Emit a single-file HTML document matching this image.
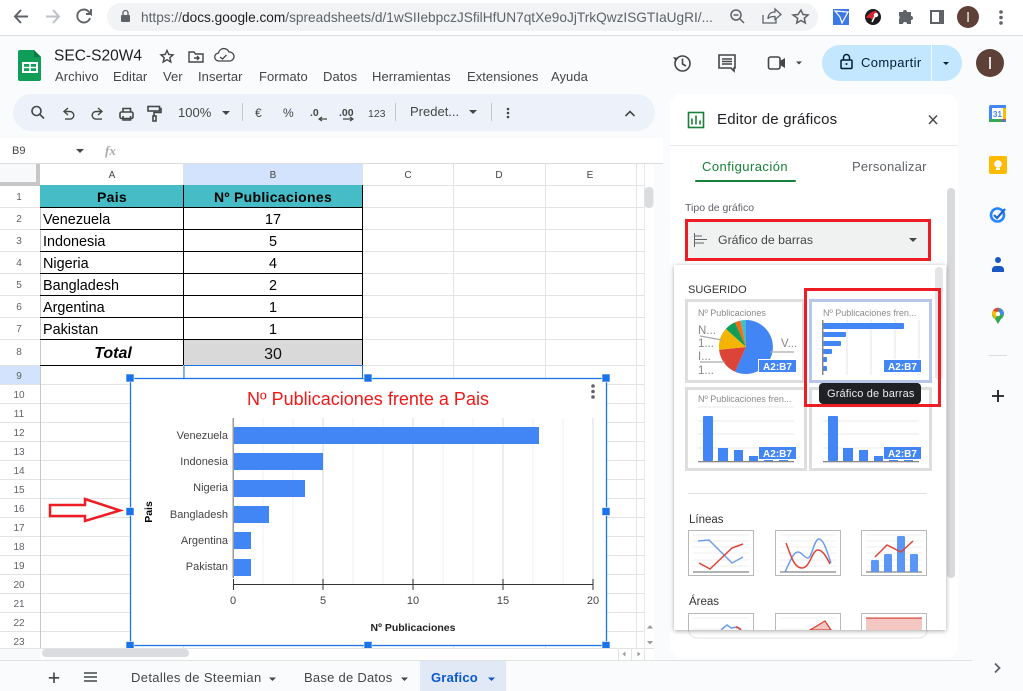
<!DOCTYPE html>
<html><head><meta charset="utf-8"><title>SEC-S20W4</title>
<style>
html,body{margin:0;padding:0;width:1023px;height:691px;overflow:hidden;background:#f9fbfd}
svg{display:block;font-family:"Liberation Sans",Arial,sans-serif}
.m{font-size:13px;fill:#444746;letter-spacing:.05px}
.r{font-size:10px;fill:#5f6368;text-anchor:middle}
.c{font-size:10px;fill:#444;text-anchor:middle}
.d{font-size:14.400px;fill:#000}
.n{font-size:14.400px;fill:#000;text-anchor:middle}
.l{font-size:11px;fill:#444;text-anchor:end}
.t{font-size:11px;fill:#444;text-anchor:middle}
.b{font-size:10px;fill:#fff;font-weight:bold;text-anchor:middle}
.g{font-size:9px;fill:#8a8a8a}
.h{font-size:11.500px;fill:#888}
.i{fill:none;stroke:#444746;stroke-width:1.600}
</style></head><body>
<svg width="1023" height="691" viewBox="0 0 1023 691" xmlns="http://www.w3.org/2000/svg">
<defs>
<filter id="sh" x="-10%" y="-10%" width="120%" height="120%"><feDropShadow dx="0" dy="1" stdDeviation="2.500" flood-color="#000" flood-opacity=".35"/></filter>
<clipPath id="cp"><rect x="674" y="265" width="272" height="365"/></clipPath>
</defs>
<!-- browser bar -->
<rect width="1023" height="35" fill="#fff"/>
<rect y="35" width="1023" height="1" fill="#dadce0"/>
<rect x="107" y="3" width="711" height="28" rx="14" fill="#f1f3f4"/>
<path d="M28 16.500H15M21 10L15 16.500L21 23" fill="none" stroke="#5f6368" stroke-width="2"/>
<path d="M46 16.500H59M53 10L59 16.500L53 23" fill="none" stroke="#bdc1c6" stroke-width="2"/>
<path d="M90 18a6.500 6.500 0 1 1-1.500-6.500L91 14V9M91 14h-5" fill="none" stroke="#5f6368" stroke-width="1.900"/>
<rect x="121" y="15" width="9" height="7" rx="1" fill="#5f6368"/><path d="M123 15v-2a2.300 2.300 0 0 1 5 0v2" fill="none" stroke="#5f6368" stroke-width="1.300"/>
<text x="141" y="22" font-size="14" fill="#5f6368" textLength="572" lengthAdjust="spacingAndGlyphs">https://<tspan fill="#202124">docs.google.com</tspan>/spreadsheets/d/1wSIIebpczJSfilHfUN7qtXe9oJjTrkQwzISGTIaUgRI/...</text>
<circle cx="736" cy="15" r="5" fill="none" stroke="#5f6368" stroke-width="1.500"/><path d="M733.500 15h5M740 19l4 4" stroke="#5f6368" stroke-width="1.500"/>
<path d="M763 15v8h13v-4M768 19c0-5 3-7 7-7V9l6 5.500-6 5v-3c-3 0-5 0-7 2z" fill="none" stroke="#5f6368" stroke-width="1.300"/>
<path d="M801 10l2 4.500 5 .5-3.700 3.300 1 4.700-4.300-2.500-4.300 2.500 1-4.700L793 15l5-.5z" fill="none" stroke="#5f6368" stroke-width="1.500"/>
<rect x="833" y="9" width="16" height="16" fill="#3b78e7"/><path d="M835 11l13 1-6 11-2-6z" fill="none" stroke="#fff" stroke-width="1.200"/>
<circle cx="873" cy="17" r="8" fill="#1c1c1c"/><path d="M866 18c2-4 6-7 10-7l2 3-5 6-3-2z" fill="#d9232e"/><circle cx="876" cy="15" r="2.200" fill="#fff"/><path d="M875 16l-3 6" stroke="#fff" stroke-width="1.500"/>
<path d="M899 12h4a2 2 0 0 1 4 0h4v4a2 2 0 0 1 0 4v4h-4a2 2 0 0 0-4 0h-4v-5a2 2 0 0 0 0-3z" fill="#5f6368"/>
<rect x="930" y="10" width="14" height="14" fill="#5f6368"/><rect x="932" y="12" width="7" height="10" fill="#fff"/>
<circle cx="968" cy="17" r="11" fill="#5d4037"/><rect x="967.300" y="12" width="1.500" height="10" fill="#e6dedb"/>
<g fill="#5f6368"><circle cx="1001" cy="12" r="1.800"/><circle cx="1001" cy="17.500" r="1.800"/><circle cx="1001" cy="23" r="1.800"/></g>

<!-- docs header -->
<path d="M20 50h14l7 7v22a2 2 0 0 1-2 2H20a2 2 0 0 1-2-2V52a2 2 0 0 1 2-2z" fill="#0f9d58"/>
<path d="M34 50l7 7h-7z" fill="#0a7a42"/>
<rect x="23" y="63" width="14" height="9" fill="none" stroke="#fff" stroke-width="2"/><path d="M30 63v9M23 67.500h14" stroke="#fff" stroke-width="1.500"/>
<text x="54" y="60.500" font-size="16" fill="#1f1f1f" textLength="88" lengthAdjust="spacingAndGlyphs">SEC-S20W4</text>
<path d="M167 50.500l1.800 4 4.200.4-3.200 2.800 1 4.300-3.800-2.300-3.800 2.300 1-4.300-3.200-2.800 4.200-.4z" fill="none" stroke="#444746" stroke-width="1.400"/>
<path d="M189 52h5l1.500 2H203v8h-14zM194 58h5M197 56l2 2-2 2" fill="none" stroke="#444746" stroke-width="1.400"/>
<path d="M221 61h-2a4 4 0 0 1-.5-8 5.500 5.500 0 0 1 10.500-1 4.500 4.500 0 0 1 1 9zM220 57l2.500 2 4-4" fill="none" stroke="#444746" stroke-width="1.300"/>
<text x="55" y="81" class="m">Archivo</text><text x="113" y="81" class="m">Editar</text><text x="163" y="81" class="m">Ver</text><text x="198" y="81" class="m">Insertar</text><text x="259" y="81" class="m">Formato</text><text x="323" y="81" class="m">Datos</text><text x="372" y="81" class="m">Herramientas</text><text x="467" y="81" class="m">Extensiones</text><text x="551" y="81" class="m">Ayuda</text>

<circle cx="682.500" cy="63.500" r="7.500" class="i" stroke-width="1.800"/><path d="M682.500 58.500v5.500l3.500 2" class="i"/><path d="M673 57l3 4.500 2.500-3.500z" fill="#444746"/>
<path d="M719 55h16v13h-1v3l-3-3h-12z" class="i" stroke-width="1.800"/><path d="M722 59h10M722 61.500h10M722 64h10" class="i" stroke-width="1.200"/>
<rect x="768.500" y="57" width="11.500" height="12" rx="2" class="i" stroke-width="1.800"/><path d="M780 61l5-3v10l-5-3z" fill="#444746"/>
<path d="M796 61.500h6l-3 3z" fill="#444746"/>
<rect x="822" y="45" width="140" height="36" rx="18" fill="#c2e7ff"/><rect x="931" y="45" width="1" height="36" fill="#f4fbff"/>
<rect x="841" y="60" width="11" height="8.500" rx="1" fill="none" stroke="#001d35" stroke-width="1.500"/><path d="M843.500 60v-2.500a3 3 0 0 1 6 0V60" fill="none" stroke="#001d35" stroke-width="1.500"/><circle cx="846.500" cy="64" r="1" fill="#001d35"/>
<text x="861" y="67" font-size="13" fill="#001d35" letter-spacing=".4">Compartir</text>
<path d="M943 62h6l-3 3z" fill="#001d35"/>
<circle cx="990" cy="63" r="14" fill="#5d4037"/><rect x="989" y="57" width="2" height="12" fill="#e6dedb"/>

<!-- toolbar -->
<rect x="13" y="94" width="642" height="37" rx="18.500" fill="#edf2fa"/>
<circle cx="36.500" cy="111" r="4.500" class="i"/><path d="M40 114.500l4 4" class="i" stroke-width="1.800"/>
<path d="M68 108l-4 3.500 4 3.500M64.500 111.500H70a3.800 3.800 0 0 1 0 7.600H65" fill="none" stroke="#444746" stroke-width="1.400"/>
<path d="M98 108l4 3.500-4 3.500M101.500 111.500H96a3.800 3.800 0 0 0 0 7.600h6" fill="none" stroke="#444746" stroke-width="1.400"/>
<rect x="120" y="112" width="13" height="6.500" rx="1.500" class="i" stroke-width="1.500"/><path d="M123 112v-3.500h7.500V112M123 116v4h7.500v-4" class="i" stroke-width="1.500"/>
<rect x="148" y="106.500" width="11.500" height="4.500" class="i" stroke-width="1.400"/><path d="M159.500 108.500h1.500v4h-7v3.500" class="i" stroke-width="1.300"/><rect x="153" y="116" width="3" height="5" class="i" stroke-width="1.200"/>
<text x="178" y="117" font-size="13" fill="#444746">100%</text><path d="M222 111h8l-4 4z" fill="#444746"/>
<rect x="242" y="103" width="1" height="18" fill="#c7c7c7"/>
<text x="255" y="117" font-size="12" fill="#444746">€</text><text x="283" y="117" font-size="12" fill="#444746">%</text>
<text x="310" y="116" font-size="10.500" fill="#444746" font-weight="bold">.0</text><path d="M327 119h-7M322 117l-3 2 3 2" fill="none" stroke="#444746" stroke-width="1.200"/>
<text x="339" y="116" font-size="10.500" fill="#444746" font-weight="bold">.00</text><path d="M343 119h9M350 117l3 2-3 2" fill="none" stroke="#444746" stroke-width="1.200"/>
<text x="368" y="117" font-size="10.500" fill="#444746">123</text>
<rect x="395" y="103" width="1" height="18" fill="#c7c7c7"/>
<text x="410" y="116" font-size="13" fill="#444746">Predet...</text><path d="M469 110h8l-4 4z" fill="#444746"/>
<rect x="491" y="103" width="1" height="18" fill="#c7c7c7"/>
<g fill="#444746"><circle cx="508" cy="109" r="1.300"/><circle cx="508" cy="113" r="1.300"/><circle cx="508" cy="117" r="1.300"/></g>
<path d="M625.500 116l4.500-4.500 4.500 4.500" class="i"/>

<!-- formula bar -->
<rect x="0" y="138" width="663" height="26" fill="#fff"/>
<text x="12" y="154" font-size="11" fill="#444746">B9</text><path d="M76 149h8l-4 4z" fill="#444746"/>
<text x="105" y="155" font-size="13" fill="#aaa" font-style="italic" font-family="Liberation Serif,serif" font-weight="bold">fx</text>
<rect y="163" width="663" height="1" fill="#dadce0"/>

<!-- grid -->
<rect x="0" y="164" width="654" height="484" fill="#fff"/>
<rect x="183" y="164" width="179" height="21" fill="#d3e3fd"/>
<rect x="0" y="365" width="40" height="19" fill="#d3e3fd"/>
<rect x="0" y="164" width="36" height="18" fill="#f8f9fa"/>
<rect x="36" y="164" width="4" height="21" fill="#c7c7c7"/><rect x="0" y="182" width="40" height="3" fill="#c7c7c7"/>
<path d="M0 207H644M0 229H644M0 251H644M0 273H644M0 295H644M0 317H644M0 339H644M0 365H644M0 384H644M0 403H644M0 422H644M0 441H644M0 460H644M0 479H644M0 498H644M0 517H644M0 536H644M0 555H644M0 574H644M0 593H644M0 612H644M0 631H644M40 185H644" stroke="#e2e3e3" stroke-width="1" transform="translate(0,.5)"/>
<path d="M183 164V648M362 164V648M453 164V648M545 164V648M636 164V648" stroke="#e2e3e3" transform="translate(.5,0)"/>
<path d="M40 185V648" stroke="#c7c7c7" transform="translate(.5,0)"/>
<path d="M644 164V660" stroke="#e8e8e8" transform="translate(.5,0)"/>
<path d="M0 185H40M40 185H362" stroke="#c7c7c7" transform="translate(0,.5)"/>
<text x="112" y="178" class="c">A</text><text x="273" y="178" class="c" fill="#0b1f4a">B</text><text x="408" y="178" class="c">C</text><text x="499" y="178" class="c">D</text><text x="590" y="178" class="c">E</text>
<text x="19" y="200" class="r">1</text><text x="19" y="222" class="r">2</text><text x="19" y="244" class="r">3</text><text x="19" y="266" class="r">4</text><text x="19" y="288" class="r">5</text><text x="19" y="310" class="r">6</text><text x="19" y="332" class="r">7</text><text x="19" y="355" class="r">8</text><text x="19" y="379" class="r" fill="#0b1f4a">9</text>
<text x="19" y="398" class="r">10</text><text x="19" y="417" class="r">11</text><text x="19" y="436" class="r">12</text><text x="19" y="455" class="r">13</text><text x="19" y="474" class="r">14</text><text x="19" y="493" class="r">15</text><text x="19" y="512" class="r">16</text><text x="19" y="531" class="r">17</text><text x="19" y="550" class="r">18</text><text x="19" y="569" class="r">19</text><text x="19" y="588" class="r">20</text><text x="19" y="607" class="r">21</text><text x="19" y="626" class="r">22</text><text x="19" y="645" class="r">23</text>

<!-- table -->
<rect x="40" y="185" width="322" height="22" fill="#46bdc6"/>
<rect x="183" y="339" width="179" height="26" fill="#d9d9d9"/>
<path d="M40 207H362M40 229H362M40 251H362M40 273H362M40 295H362M40 317H362M40 339H362" stroke="#000" transform="translate(0,.5)"/>
<path d="M183 207V365M362 185V365" stroke="#000" transform="translate(.5,0)"/><path d="M183 185V207" stroke="#000" transform="translate(.5,0)"/>
<path d="M40 365H183" stroke="#000" transform="translate(0,.5)"/>
<text x="112" y="202" font-size="14" font-weight="bold" text-anchor="middle" letter-spacing=".3">Pais</text>
<text x="273" y="202" font-size="14" font-weight="bold" text-anchor="middle" letter-spacing=".3">Nº Publicaciones</text>
<text x="43" y="224" class="d">Venezuela</text><text x="273" y="224" class="n">17</text>
<text x="43" y="246" class="d">Indonesia</text><text x="273" y="246" class="n">5</text>
<text x="43" y="268" class="d">Nigeria</text><text x="273" y="268" class="n">4</text>
<text x="43" y="290" class="d">Bangladesh</text><text x="273" y="290" class="n">2</text>
<text x="43" y="312" class="d">Argentina</text><text x="273" y="312" class="n">1</text>
<text x="43" y="334" class="d">Pakistan</text><text x="273" y="334" class="n">1</text>
<text x="113" y="358" font-size="16" font-weight="bold" font-style="italic" text-anchor="middle">Total</text>
<text x="273" y="359" font-size="16" text-anchor="middle" fill="#111">30</text>
<path d="M184 365.500H362.500V378M184 365.500V378" fill="none" stroke="#1a73e8"/>

<!-- red arrow -->
<path d="M50 505H85V499L120 510.500L85 521V516H50Z" fill="#fff" stroke="#ee1c25" stroke-width="2.500"/>

<!-- chart -->
<rect x="130.500" y="378" width="476" height="267" fill="#fff"/>
<path d="M263 418V585M293 418V585M353 418V585M383 418V585M443 418V585M473 418V585M533 418V585M563 418V585" stroke="#f1f1f1"/>
<path d="M323 418V585M413 418V585M503 418V585M593 418V585" stroke="#e3e3e3" stroke-width="1.300"/>
<text x="368" y="405" font-size="18" fill="#f01818" text-anchor="middle" textLength="242" lengthAdjust="spacingAndGlyphs">Nº Publicaciones frente a Pais</text>
<g fill="#4285f4"><rect x="233" y="427" width="306" height="17"/><rect x="233" y="453" width="90" height="17"/><rect x="233" y="480" width="72" height="17"/><rect x="233" y="506" width="36" height="17"/><rect x="233" y="532" width="18" height="17"/><rect x="233" y="559" width="18" height="17"/></g>
<rect x="232.500" y="418" width="1.500" height="160" fill="#9a9a9a"/>
<text x="228" y="439" class="l">Venezuela</text><text x="228" y="465" class="l">Indonesia</text><text x="228" y="491" class="l">Nigeria</text><text x="228" y="518" class="l">Bangladesh</text><text x="228" y="544" class="l">Argentina</text><text x="228" y="570" class="l">Pakistan</text>
<path d="M233 584.500H593M233.500 579V590M323 579V590M413 579V590M503 579V590M593 579V590" stroke="#333" fill="none"/>
<text x="233" y="604" class="t">0</text><text x="323" y="604" class="t">5</text><text x="413" y="604" class="t">10</text><text x="503" y="604" class="t">15</text><text x="593" y="604" class="t">20</text>
<text x="413" y="631" font-size="10.500" font-weight="bold" fill="#222" text-anchor="middle">Nº Publicaciones</text>
<text transform="translate(152,512) rotate(-90)" font-size="10.500" font-weight="bold" fill="#000" text-anchor="middle">Pais</text>
<g fill="#5f6368"><circle cx="593" cy="386" r="1.800"/><circle cx="593" cy="391.500" r="1.800"/><circle cx="593" cy="397" r="1.800"/></g>
<rect x="130.500" y="378.500" width="476" height="267" fill="none" stroke="#1a73e8" stroke-width="1.300"/>
<g fill="#1a73e8" stroke="#fff" stroke-width=".6"><rect x="126" y="374" width="8" height="8"/><rect x="364" y="374" width="8" height="8"/><rect x="602" y="374" width="8" height="8"/><rect x="126" y="507.500" width="8" height="8"/><rect x="602" y="507.500" width="8" height="8"/><rect x="126" y="641.500" width="8" height="8"/><rect x="364" y="641.500" width="8" height="8"/><rect x="602" y="641.500" width="8" height="8"/></g>

<!-- scrollbars -->
<rect x="644.500" y="187" width="9" height="21" rx="4" fill="#dadce0"/>
<rect x="0" y="648" width="654" height="12" fill="#fff"/>
<rect x="0" y="648" width="654" height="1" fill="#e2e3e3"/>
<rect x="0" y="649" width="40" height="11" fill="#f8f9fa"/>
<rect x="42" y="649" width="147" height="8" rx="4" fill="#dadce0"/>
<path d="M618.500 648V660M631.500 648V660M644.500 648V660" stroke="#e2e3e3"/>
<path d="M625.500 651.500v5l-3-2.500zM637.500 651.500v5l3-2.500z" fill="#9a9a9a"/>
<path d="M647 628.500l3-3.500 3 3.500zM647 641l3 3.500 3-3.500z" fill="#9a9a9a"/>
<rect x="0" y="660" width="972" height="1" fill="#e1e3e1"/>

<!-- sheets bar -->
<path d="M54 672.500V683M48.800 677.800H59.200" stroke="#444746" stroke-width="1.600"/>
<path d="M84 673H97M84 677H97M84 681H97" stroke="#444746" stroke-width="1.500"/>
<text x="131" y="682" font-size="13" fill="#444746" letter-spacing=".35">Detalles de Steemian</text><path d="M269 677.500h7l-3.500 3.500z" fill="#444746"/>
<text x="304" y="682" font-size="13" fill="#444746" letter-spacing=".25">Base de Datos</text><path d="M401 677.500h7l-3.500 3.500z" fill="#444746"/>
<rect x="420" y="661" width="86" height="30" fill="#e1e9f7"/>
<text x="431" y="682" font-size="13" font-weight="bold" fill="#0b57d0" letter-spacing=".2">Grafico</text><path d="M488 677.500h7l-3.500 3.500z" fill="#0b57d0"/>

<!-- right strip -->
<path d="M991 105h15v17h-15a2 2 0 0 1-2-2v-13a2 2 0 0 1 2-2z" fill="#4285f4"/><rect x="992" y="108" width="11" height="11" fill="#fff"/><rect x="989" y="119" width="13" height="3" fill="#34a853"/><rect x="1003" y="108" width="3" height="11" fill="#fbbc04"/><path d="M1003 119h3l-3 3z" fill="#ea4335"/>
<text x="997.500" y="117" font-size="8" font-weight="bold" fill="#4285f4" text-anchor="middle">31</text>
<rect x="989" y="156" width="18" height="18" rx="2" fill="#ffba00"/><circle cx="998" cy="164" r="3.800" fill="#fff"/><rect x="996" y="168" width="4" height="2" fill="#fff"/>
<circle cx="997.500" cy="215" r="6.500" fill="none" stroke="#2684fc" stroke-width="2.600"/><path d="M994 215l3 3 8-9" fill="none" stroke="#1967d2" stroke-width="2.200"/>
<circle cx="998" cy="260" r="3" fill="#1a57c4"/><path d="M992 272v-3a4 4 0 0 1 4-3h4a4 4 0 0 1 4 3v3z" fill="#1a57c4"/>
<path d="M998 324l-3-5a6 6 0 1 1 6 0z" fill="#34a853"/><path d="M992 314a6 6 0 0 1 3-5l3 5-3 5z" fill="#fbbc04"/><path d="M993 311a6 6 0 0 1 6-3l-1 4z" fill="#ea4335"/><path d="M999 308a6 6 0 0 1 5 6l-4 1z" fill="#4285f4"/><circle cx="998" cy="314" r="2.200" fill="#fff"/>
<rect x="989" y="355" width="18" height="1" fill="#dadce0"/>
<path d="M998 390V402M992 396H1004" stroke="#1f1f1f" stroke-width="1.800"/>
<path d="M995 663.500l4.500 4.500-4.500 4.500" fill="none" stroke="#5f6368" stroke-width="1.800"/>

<!-- side panel -->
<rect x="670" y="94" width="288" height="564" rx="12" fill="#fff"/>
<rect x="688.500" y="112.500" width="15" height="15" fill="none" stroke="#188038" stroke-width="1.600"/><path d="M692 118.500v6M696 115.500v9M700 120.500v4" stroke="#188038" stroke-width="1.600"/>
<text x="717" y="124" font-size="15" fill="#202124" letter-spacing=".2">Editor de gráficos</text>
<path d="M929 115.500l8 8.500M937 115.500l-8 8.500" stroke="#444746" stroke-width="1.400"/>
<rect x="670" y="145" width="288" height="1" fill="#e8eaed"/>
<text x="702" y="171" font-size="13" fill="#188038" letter-spacing=".45">Configuración</text>
<text x="852" y="171" font-size="13" fill="#5f6368" letter-spacing=".2">Personalizar</text>
<rect x="695" y="180" width="101" height="2" rx="1" fill="#188038"/>
<rect x="947" y="188" width="8" height="390" rx="4" fill="#d8d9dc"/>
<text x="685" y="211" font-size="10.500" fill="#5f6368">Tipo de gráfico</text>
<rect x="686" y="220" width="244" height="40" fill="#f0f2f1"/>
<rect x="686.500" y="220.500" width="243" height="39" fill="none" stroke="#ee1c25" stroke-width="3"/>
<path d="M694.500 233V247" stroke="#5f6368"/><path d="M694 236h8M694 239.500h13M694 243h10" stroke="#5f6368"/>
<text x="718" y="244" font-size="12.300" fill="#444746">Gráfico de barras</text>
<path d="M909 238h8l-4 4z" fill="#444746"/>
<rect x="688.500" y="620" width="239" height="18" rx="9" fill="#fff" stroke="#e4e4e4"/>

<!-- popup -->
<rect x="674" y="265" width="272" height="365" fill="#fff" filter="url(#sh)"/>
<g clip-path="url(#cp)">
<rect x="935" y="267" width="8" height="113" rx="4" fill="#e4e5e7"/>
<text x="688" y="293" font-size="11" fill="#333">SUGERIDO</text>
<!-- thumb 1 -->
<rect x="686.500" y="300.500" width="117" height="81" fill="#fff" stroke="#dedede" stroke-width="3"/>
<text x="698" y="316" class="g">Nº Publicaciones</text>
<path d="M746 347V320A27 27 0 1 1 735 371.700Z" fill="#4285f4"/><path d="M746 347L735 371.700A27 27 0 0 1 719.100 349.800Z" fill="#db4437"/><path d="M746 347L719.100 349.800A27 27 0 0 1 725.900 328.900Z" fill="#f4b400"/><path d="M746 347L725.900 328.900A27 27 0 0 1 735 322.300Z" fill="#0f9d58"/><path d="M746 347L735 322.300A27 27 0 0 1 740.400 320.600Z" fill="#f76a0f"/><path d="M746 347L740.400 320.600A27 27 0 0 1 746 320Z" fill="#46bdc6"/>
<text x="698" y="334" class="h">N...</text><text x="698" y="347" class="h">1...</text><text x="698" y="360" class="h">I...</text><text x="698" y="374" class="h">1...</text><text x="781" y="347" class="h">V...</text>
<path d="M700 336L722 340M700 362L725 362M770 352H794" stroke="#aaa" stroke-width="1.300" fill="none"/>
<rect x="758.500" y="359.500" width="38" height="13" fill="#4285f4" stroke="#fff"/><text x="777.500" y="370" class="b">A2:B7</text>
<!-- thumb 2 -->
<rect x="810.500" y="300.500" width="120" height="81" fill="#fff" stroke="#b9c6ea" stroke-width="3"/>
<text x="823" y="316" class="g">Nº Publicaciones fren...</text>
<path d="M847 320V375M871 320V375M895 320V375M919 320V375" stroke="#e4e4e4"/>
<g fill="#4285f4"><rect x="823" y="323" width="81" height="6" rx="1"/><rect x="823" y="332" width="23" height="5" rx="1"/><rect x="823" y="341" width="18" height="5" rx="1"/><rect x="823" y="349" width="9" height="5" rx="1"/><rect x="823" y="357" width="4" height="5" rx="1"/><rect x="823" y="366" width="4" height="5" rx="1"/></g>
<rect x="822" y="320" width="1.500" height="55" fill="#888"/>
<rect x="883.500" y="359.500" width="38" height="13" fill="#4285f4" stroke="#fff"/><text x="902.500" y="370" class="b">A2:B7</text>
<!-- thumb 3 -->
<rect x="686.500" y="388.500" width="119" height="81" fill="#fff" stroke="#dedede" stroke-width="3"/>
<text x="698" y="402" class="g">Nº Publicaciones fren...</text>
<path d="M698 407H794M698 421H794M698 434H794M698 448H794" stroke="#e8e8e8"/>
<g fill="#4285f4"><rect x="703" y="416" width="10" height="45" rx="1"/><rect x="718" y="448" width="10" height="13"/><rect x="734" y="450" width="9" height="11"/><rect x="749" y="456" width="9" height="5"/><rect x="764" y="458" width="9" height="3"/><rect x="779" y="458" width="9" height="3"/></g>
<rect x="698" y="461" width="96" height="1.300" fill="#888"/>
<rect x="758.500" y="446.500" width="38" height="13" fill="#4285f4" stroke="#fff"/><text x="777.500" y="457" class="b">A2:B7</text>
<!-- thumb 4 -->
<rect x="810.500" y="388.500" width="120" height="81" fill="#fff" stroke="#dedede" stroke-width="3"/>
<path d="M823 407H919M823 421H919M823 434H919M823 448H919" stroke="#e8e8e8"/>
<g fill="#4285f4"><rect x="828" y="416" width="10" height="45" rx="1"/><rect x="843" y="448" width="10" height="13"/><rect x="859" y="450" width="9" height="11"/><rect x="874" y="456" width="9" height="5"/><rect x="889" y="458" width="9" height="3"/><rect x="904" y="458" width="9" height="3"/></g>
<rect x="823" y="461" width="96" height="1.300" fill="#888"/>
<rect x="883.500" y="446.500" width="38" height="13" fill="#4285f4" stroke="#fff"/><text x="902.500" y="457" class="b">A2:B7</text>
<!-- tooltip + red box -->
<rect x="819" y="383" width="102" height="21" rx="4" fill="#202124"/>
<text x="827" y="397" font-size="11" fill="#e8eaed" letter-spacing=".15">Gráfico de barras</text>
<rect x="805.500" y="289.500" width="134" height="116" fill="none" stroke="#ee1c25" stroke-width="3"/>
<rect x="688" y="493" width="239" height="1" fill="#e0e0e0"/>
<text x="689" y="523" font-size="11.500" fill="#333">Líneas</text>
<text x="689" y="605" font-size="11.500" fill="#333">Áreas</text>
<!-- line thumbs -->
<g fill="#fff" stroke="#b8b8b8"><rect x="688.500" y="530.500" width="65" height="45"/><rect x="775.500" y="530.500" width="65" height="45"/><rect x="861.500" y="530.500" width="65" height="45"/><rect x="688.500" y="613.500" width="65" height="45"/><rect x="775.500" y="613.500" width="65" height="45"/><rect x="861.500" y="613.500" width="65" height="45"/></g>
<path d="M693 535H749M693 541H749M693 547H749M693 553H749M693 560H749M693 566H749M780 535H836M780 541H836M780 547H836M780 553H836M780 560H836M780 566H836M866 535H922M866 541H922M866 547H922M866 553H922M866 560H922M866 566H922M693 618H749M780 618H836M693 629H749M780 629H836" stroke="#efefef"/>
<path d="M693 572H749M780 572H836M866 572H922" stroke="#666"/>
<path d="M698 541L709 540L732 563L743 557" fill="none" stroke="#6d9eeb" stroke-width="1.500"/>
<path d="M699 563L710 569L732 548L743 544" fill="none" stroke="#db4437" stroke-width="1.500"/>
<path d="M785 572C790 562 793 552 798 552C802 552 804 558 808 558C812 558 814 539 819 539C824 539 828 555 831 563" fill="none" stroke="#6d9eeb" stroke-width="1.500"/>
<path d="M786 543C791 556 794 568 802 568C810 568 812 550 818 550C823 550 827 558 830 564" fill="none" stroke="#db4437" stroke-width="1.500"/>
<g fill="#5b95f5"><rect x="871" y="560" width="8" height="12" rx="1.500"/><rect x="884" y="554" width="8" height="18" rx="1.500"/><rect x="897" y="536" width="8" height="36" rx="1.500"/><rect x="910" y="554" width="8" height="18" rx="1.500"/></g>
<path d="M875 557L887 545L901 552L913 541" fill="none" stroke="#db4437" stroke-width="1.500"/>
<path d="M721 630L727 625L731 628L737 627L741 629" fill="none" stroke="#6d9eeb" stroke-width="1.500"/>
<path d="M736 628L737 627L741 630" fill="none" stroke="#db4437" stroke-width="1.500"/>
<path d="M810 630L825 621L831 630Z" fill="#f4c7c3" stroke="#db4437" stroke-width="1.300"/>
<rect x="866" y="618" width="56" height="12" fill="#f4c7c3"/><rect x="866" y="617.500" width="56" height="1.200" fill="#db4437"/>
</g>
</svg>
</body></html>
